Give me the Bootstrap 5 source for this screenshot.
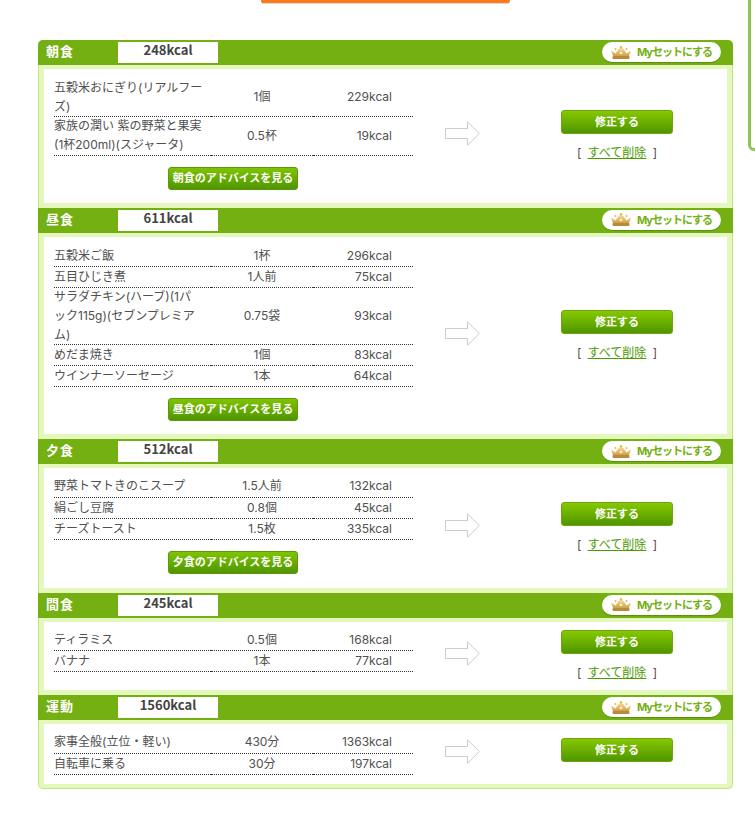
<!DOCTYPE html>
<html lang="ja"><head><meta charset="utf-8">
<link href="https://cdn.jsdelivr.net/npm/bootstrap@5.3.0/dist/css/bootstrap.min.css" rel="stylesheet">
<style>
html,body{background:#fff;overflow:hidden;height:816px}
body{font-family:Inter,"Noto Sans CJK JP","Noto Sans",sans-serif;font-size:12px;line-height:18.7px;color:#505050;position:relative}
.topbar{width:249px;height:4px;margin-left:261px;background:#ff7a1a;border-bottom:1px solid #d9d9d9;border-radius:0 0 3px 3px}
.sidebar{position:absolute;left:748px;top:-10px;width:20px;height:161px;border:3px solid #8fc653;border-radius:6px;background:#fff}
.panel{width:695px;margin:36px 0 0 38px;background:#e4f8bd;border:solid #bde87b;border-width:0 1px 1px;border-radius:5px}
.head{height:25px;background:#75b013;margin:0 -1px;padding:0 0 0 8px}
.panel>.head:first-child{border-radius:5px 5px 0 0}
.ttl{width:72px;color:#fff;font-weight:700;font-size:13px;letter-spacing:1px;line-height:23px}
.tot{width:100px;height:21px;margin-top:2px;background:#fff;color:#444;font-family:"Noto Sans CJK JP",sans-serif;font-weight:700;text-align:center;line-height:16px;font-size:13px}
.mybtn{width:119px;height:20px;margin:2px 12px 0 auto;background:#fff;border-radius:10px;color:#75b013;font-weight:700;font-size:11px;letter-spacing:-1px;line-height:20px;white-space:nowrap;box-shadow:0 1px 1px #5d8f0c;display:flex;align-items:center}
.mybtn svg{margin:0 5px 0 8px;flex:none}
.body{background:#fff;margin:4px 5px 5px;padding:0 10px 5px}
.panel .body:last-child{margin-bottom:4px}
.left{width:359px;padding-top:9px}
.tail-f{padding-top:10px}
.tail-t{padding-top:8px;padding-bottom:1px}
.tail-s{padding-top:8px;padding-bottom:13px}
.tail-x{padding-top:8px;padding-bottom:4px}
.tbl{width:359px;border-collapse:collapse;table-layout:fixed}
.tbl td{padding:0;border-bottom:1px dotted #333;vertical-align:middle;height:21px}
.tbl td:nth-child(1){width:157px;padding-right:6px}
.tbl td:nth-child(2){width:102px;text-align:center}
.tbl td:nth-child(3){width:100px;text-align:right;padding-right:21px}
.adv{display:block;width:130px;height:23px;margin:11px 0 8px 114px;padding:0;border:1px solid #5c9a06;border-radius:3px;background:linear-gradient(#7fc400,#4f9500);color:#fff;font-weight:700;font-size:11px;line-height:19px;text-align:center}
.arrowbox{width:35px;margin-left:32px;line-height:0}
.right{width:112px;margin-left:81px;text-align:center}
.fix{display:block;width:112px;height:24px;margin-bottom:4px;padding:0;border:1px solid #6aa70a;border-radius:3px;background:linear-gradient(#86c800,#4f9500);color:#fff;font-weight:700;font-size:11px;line-height:20px}
.del{margin:10px 0 -6px;color:#505050;height:19px}
.del a{color:#4a9b00;margin:0 3px}
</style></head><body>
<svg width="0" height="0" class="d-block position-absolute"><defs><linearGradient id="gold" x1="0" y1="0" x2="0" y2="1"><stop offset="0" stop-color="#fbe39a"/><stop offset="1" stop-color="#d0a048"/></linearGradient><symbol id="crown" viewBox="0 0 22 13"><path d="M1 4.500l4.500 3L8 3.500l3-2 3 2 2.500 4L21 4.500 19 10H3z" fill="url(#gold)"/><rect x="2.500" y="10" width="17" height="3" rx="1" fill="#b98a3c"/><circle cx="11" cy="1.200" r="1.200" fill="#e6b94f"/><circle cx="5.500" cy="3" r="1" fill="#e6b94f"/><circle cx="16.500" cy="3" r="1" fill="#e6b94f"/><circle cx="11" cy="7" r="1.300" fill="#fff3cf"/></symbol><symbol id="arw" viewBox="0 0 35 25"><path d="M.5 7.500h22V.8L34.300 12.500 22.500 24.200v-6.700H.5z" fill="#fff" stroke="#ccc"/></symbol></defs></svg>
<div class="topbar"></div>
<div class="sidebar"></div>
<div class="panel">

<div class="head d-flex"><div class="ttl">朝食</div><div class="tot">248kcal</div><div class="mybtn"><svg width="22" height="13"><use href="#crown"/></svg>Myセットにする</div></div>
<div class="body d-flex align-items-center"><div class="left tail-f">
<table class="tbl"><tr><td>五穀米おにぎり(リアルフーズ)</td><td>1個</td><td>229kcal</td></tr><tr><td>家族の潤い 紫の野菜と果実(1杯200ml)(スジャータ)</td><td>0.5杯</td><td>19kcal</td></tr></table>
<button class="adv" type="button">朝食のアドバイスを見る</button></div>
<div class="arrowbox"><svg width="35" height="25"><use href="#arw"/></svg></div>
<div class="right"><button class="fix" type="button">修正する</button><div class="del">[ <a href="#">すべて削除</a> ]</div></div></div>

<div class="head d-flex"><div class="ttl">昼食</div><div class="tot">611kcal</div><div class="mybtn"><svg width="22" height="13"><use href="#crown"/></svg>Myセットにする</div></div>
<div class="body d-flex align-items-center"><div class="left">
<table class="tbl"><tr><td>五穀米ご飯</td><td>1杯</td><td>296kcal</td></tr><tr><td>五目ひじき煮</td><td>1人前</td><td>75kcal</td></tr><tr><td>サラダチキン(ハーブ)(1パ<br>ック115g)(セブンプレミア<br>ム)</td><td>0.75袋</td><td>93kcal</td></tr><tr><td>めだま焼き</td><td>1個</td><td>83kcal</td></tr><tr><td>ウインナーソーセージ</td><td>1本</td><td>64kcal</td></tr></table>
<button class="adv" type="button">昼食のアドバイスを見る</button></div>
<div class="arrowbox"><svg width="35" height="25"><use href="#arw"/></svg></div>
<div class="right"><button class="fix" type="button">修正する</button><div class="del">[ <a href="#">すべて削除</a> ]</div></div></div>

<div class="head d-flex"><div class="ttl">夕食</div><div class="tot">512kcal</div><div class="mybtn"><svg width="22" height="13"><use href="#crown"/></svg>Myセットにする</div></div>
<div class="body d-flex align-items-center"><div class="left tail-t">
<table class="tbl"><tr><td>野菜トマトきのこスープ</td><td>1.5人前</td><td>132kcal</td></tr><tr><td>絹ごし豆腐</td><td>0.8個</td><td>45kcal</td></tr><tr><td>チーズトースト</td><td>1.5枚</td><td>335kcal</td></tr></table>
<button class="adv" type="button">夕食のアドバイスを見る</button></div>
<div class="arrowbox"><svg width="35" height="25"><use href="#arw"/></svg></div>
<div class="right"><button class="fix" type="button">修正する</button><div class="del">[ <a href="#">すべて削除</a> ]</div></div></div>

<div class="head d-flex"><div class="ttl">間食</div><div class="tot">245kcal</div><div class="mybtn"><svg width="22" height="13"><use href="#crown"/></svg>Myセットにする</div></div>
<div class="body d-flex align-items-center"><div class="left tail-s">
<table class="tbl"><tr><td>ティラミス</td><td>0.5個</td><td>168kcal</td></tr><tr><td>バナナ</td><td>1本</td><td>77kcal</td></tr></table></div>
<div class="arrowbox"><svg width="35" height="25"><use href="#arw"/></svg></div>
<div class="right"><button class="fix" type="button">修正する</button><div class="del">[ <a href="#">すべて削除</a> ]</div></div></div>

<div class="head d-flex"><div class="ttl">運動</div><div class="tot">1560kcal</div><div class="mybtn"><svg width="22" height="13"><use href="#crown"/></svg>Myセットにする</div></div>
<div class="body d-flex align-items-center"><div class="left tail-x">
<table class="tbl"><tr><td>家事全般(立位・軽い)</td><td>430分</td><td>1363kcal</td></tr><tr><td>自転車に乗る</td><td>30分</td><td>197kcal</td></tr></table></div>
<div class="arrowbox"><svg width="35" height="25"><use href="#arw"/></svg></div>
<div class="right"><button class="fix" type="button">修正する</button></div></div>
</div>
<script src="https://cdn.jsdelivr.net/npm/bootstrap@5.3.0/dist/js/bootstrap.bundle.min.js"></script>
</body></html>
